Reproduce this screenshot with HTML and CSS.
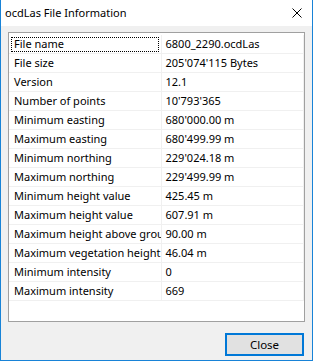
FILE: index.html
```html
<!DOCTYPE html>
<html lang="en">
<head>
  <meta charset="UTF-8" />
  <title>ocdLas File Information</title>
  <link rel="stylesheet" href="styles.css">
</head>
<body>
  <div class="fenetre">

    <!-- BARRE DE TITRE -->
    <div class="barre-titre">
      <span class="titre">ocdLas File Information</span>
      <svg class="croix" width="10" height="10" viewBox="0 0 10 10">
        <path d="M0.5 0.5 L9.5 9.5 M9.5 0.5 L0.5 9.5" stroke="#000" stroke-width="1" fill="none" />
      </svg>
    </div>

    <!-- CONTENU -->
    <div class="contenu">
      <div class="liste">
        <table class="infos">
          <colgroup>
            <col class="col-nom">
            <col class="col-valeur">
          </colgroup>
          <tbody>
            <tr><td class="focus">File name</td><td>6800_2290.ocdLas</td></tr>
            <tr><td>File size</td><td>205'074'115 Bytes</td></tr>
            <tr><td>Version</td><td>12.1</td></tr>
            <tr><td>Number of points</td><td>10'793'365</td></tr>
            <tr><td>Minimum easting</td><td>680'000.00 m</td></tr>
            <tr><td>Maximum easting</td><td>680'499.99 m</td></tr>
            <tr><td>Minimum northing</td><td>229'024.18 m</td></tr>
            <tr><td>Maximum northing</td><td>229'499.99 m</td></tr>
            <tr><td>Minimum height value</td><td>425.45 m</td></tr>
            <tr><td>Maximum height value</td><td>607.91 m</td></tr>
            <tr><td>Maximum height above ground</td><td>90.00 m</td></tr>
            <tr><td>Maximum vegetation height</td><td>46.04 m</td></tr>
            <tr><td>Minimum intensity</td><td>0</td></tr>
            <tr><td>Maximum intensity</td><td>669</td></tr>
          </tbody>
        </table>
      </div>

      <div class="boutons">
        <button class="bouton-fermer">Close</button>
      </div>
    </div>

  </div>
</body>
</html>
```

FILE: styles.css
```css
body {
  margin: 0;
  padding: 0;
  background: #fff;
  font-family: "Noto Sans", "Open Sans", sans-serif;
  font-size: 11px;
  color: #000;
}

.fenetre {
  width: 313px;
  height: 361px;
  box-sizing: border-box;
  border: 1px solid #1883d7;
  border-top: none;
  background: #f0f0f0;
  display: flex;
  flex-direction: column;
}

.barre-titre {
  height: 26px;
  background: #fff;
  display: flex;
  align-items: center;
  justify-content: space-between;
  padding: 0 10px 0 4px;
}

.titre {
  font-size: 11px;
  margin-top: -1px;
}

.croix {
  display: block;
  margin-top: -1px;
}

.contenu {
  flex: 1;
  padding: 6px 7px 0 7px;
  display: flex;
  flex-direction: column;
}

.liste {
  height: 290px;
  box-sizing: border-box;
  border: 1px solid #a0a0a0;
  background: #fff;
  padding-top: 2px;
}

.infos {
  border-collapse: collapse;
  table-layout: fixed;
  width: 294px;
}

.col-nom {
  width: 152px;
}

.col-valeur {
  width: 142px;
}

.infos td {
  height: 18px;
  padding: 0 0 0 5px;
  border-right: 1px solid #f0f0f0;
  border-bottom: 1px solid #f0f0f0;
  white-space: nowrap;
  overflow: hidden;
  line-height: 18px;
}

.infos td + td {
  padding-left: 4px;
}

.infos td.focus {
  outline: 1px dotted #000;
  outline-offset: -3px;
}

.boutons {
  display: flex;
  justify-content: flex-end;
  margin-top: 11px;
}

.bouton-fermer {
  width: 79px;
  height: 23px;
  margin-right: 1px;
  box-sizing: border-box;
  border: 2px solid #0078d7;
  background: #e1e1e1;
  font-family: "Noto Sans", "Open Sans", sans-serif;
  font-size: 11.5px;
  color: #000;
  padding: 0;
}
```
